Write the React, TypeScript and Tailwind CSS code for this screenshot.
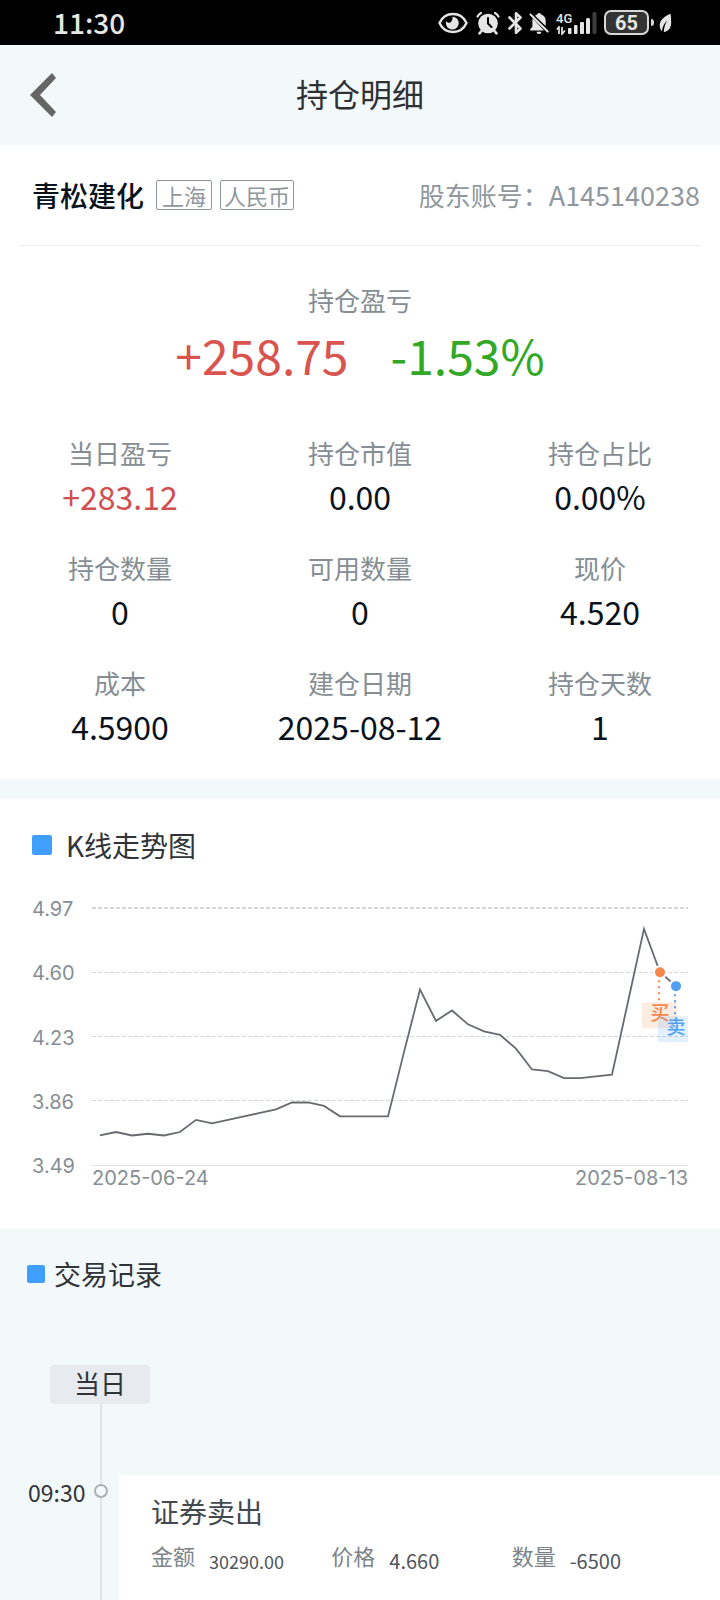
const PRICES = [
  3.66, 3.68, 3.66, 3.67, 3.66, 3.68, 3.75, 3.73, 3.75, 3.77, 3.79, 3.81, 3.85,
  3.85, 3.83, 3.77, 3.77, 3.77, 3.77, 4.14, 4.5, 4.32, 4.38, 4.3, 4.26, 4.24,
  4.16, 4.04, 4.03, 3.99, 3.99, 4.0, 4.01, 4.43, 4.85, 4.6, 4.52,
];
const TICKS = ['4.97', '4.60', '4.23', '3.86', '3.49'];
const MAX = 4.97;
const MIN = 3.49;
const PLOT_W = 596;
const PLOT_H = 257;

const px = (i: number) => 8 + i * 16;
const py = (price: number) => 1 + ((MAX - price) / (MAX - MIN)) * PLOT_H;

interface Stat {
  label: string;
  value: string;
  up?: boolean;
}

const STATS: Stat[] = [
  { label: '当日盈亏', value: '+283.12', up: true },
  { label: '持仓市值', value: '0.00' },
  { label: '持仓占比', value: '0.00%' },
  { label: '持仓数量', value: '0' },
  { label: '可用数量', value: '0' },
  { label: '现价', value: '4.520' },
  { label: '成本', value: '4.5900' },
  { label: '建仓日期', value: '2025-08-12' },
  { label: '持仓天数', value: '1' },
];

function StatusBar() {
  return (
    <div className="flex h-[45px] items-center justify-between bg-black pl-[53px] pr-12 text-[#e6e6e6]">
      <span className="text-[28px] leading-[45px] font-medium">11:30</span>
      <div className="flex items-center">
        <svg width="30" height="22" viewBox="0 0 30 22" fill="none">
          <path d="M1.5 11C4 5.500 9 2 15 2s11 3.500 13.500 9C26 16.500 21 20 15 20S4 16.500 1.500 11Z" stroke="currentColor" strokeWidth="2.400" />
          <path d="M14.500 4.800a6.400 6.400 0 1 1-6.400 7.600c-.3-1.300 0-2.300.5-3.200.8 1.500 2.600 2 4 1 1.700-1.200 2-3.400 1.900-5.400Z" fill="currentColor" />
        </svg>
        <svg className="ml-2" width="24" height="24" viewBox="0 0 24 24" fill="none" stroke="currentColor">
          <circle cx="12" cy="12.500" r="9.800" fill="currentColor" stroke="none" />
          <path d="M1.500 5.500C2.300 4 3.600 2.700 5 2M22.500 5.500C21.700 4 20.400 2.700 19 2" strokeWidth="2.200" strokeLinecap="round" />
          <path d="M5.500 20 3.500 22.300M18.500 20l2 2.300" strokeWidth="2.600" strokeLinecap="round" />
          <path d="M12 7v5.500l3.500 3.500" stroke="#000" strokeWidth="2" strokeLinecap="round" />
        </svg>
        <svg className="ml-2" width="14" height="24" viewBox="0 0 14 24" fill="none" stroke="currentColor" strokeWidth="2.600" strokeLinecap="round" strokeLinejoin="round">
          <path d="M1.500 6.500 12.500 17.500 8 21.800V2.200l4.500 4.300-11 11" />
        </svg>
        <svg className="ml-[7px]" width="20" height="24" viewBox="0 0 20 24">
          <path d="M8.300 3.200a2 2 0 0 1 3.600 0c3 .8 4.800 3.400 4.800 6.500v5.200L6 4.800c.7-.7 1.500-1.300 2.300-1.600ZM3.400 9.500c0-.8.1-1.500.3-2.200L15 19.500H1.300v-1.600l2.100-2.100ZM7.600 20.700h4.800a2.400 2.400 0 0 1-4.800 0Z" fill="currentColor" />
          <path d="M1.500 3.500 18.700 20.500" stroke="currentColor" strokeWidth="2" strokeLinecap="round" />
        </svg>
        <div className="ml-[7px] flex h-6 items-end">
          <div className="flex w-[18px] flex-col">
            <span className="font-['Roboto',sans-serif] text-[13px] leading-[14px] font-medium">4G</span>
            <svg width="10" height="9" viewBox="0 0 10 9" fill="none" stroke="currentColor" strokeWidth="1.700">
              <path d="M.8 3.500 3 1v7M6 1v7l3-3.500" />
            </svg>
          </div>
          <svg className="-ml-[6px]" width="29" height="24" viewBox="0 0 29 24" fill="currentColor">
            <rect x="0" y="17" width="3.500" height="6" rx="1" />
            <rect x="6" y="14" width="3.500" height="9" rx="1" />
            <rect x="12" y="11" width="4" height="12" rx="1" />
            <rect x="18" y="7" width="4" height="16" rx="1.500" />
            <rect x="24.500" y="1" width="4" height="22" rx="1.500" fill="#3c3c3c" />
          </svg>
        </div>
        <div className="ml-[7px] flex h-[25px] w-[45px] items-center justify-center rounded-[7px] border-2 border-[#d8d8d8] bg-[#333] font-['Roboto',sans-serif] text-[20px] leading-5 font-bold">
          65
        </div>
        <div className="ml-[2px] h-[7px] w-[3px] rounded-r bg-[#d8d8d8]" />
        <svg className="ml-[5px]" width="13" height="20" viewBox="0 0 13 20">
          <path d="M11.500.8C5 3.500.7 7.500.7 12.500c0 2.500 1 4.500 2.300 5.800C3.300 13.500 5.500 10 8.300 7.300 6.500 10.500 5 14 4.800 19c4.500-.5 7.400-4 7.400-9.500 0-3-.3-6-.7-8.700Z" fill="currentColor" />
        </svg>
      </div>
    </div>
  );
}

interface MarkerProps {
  index: number;
  color: string;
  label: string;
  boxX: number;
  boxW: number;
}

function Marker({ index, color, label, boxX, boxW }: MarkerProps) {
  const x = px(index);
  const y = py(PRICES[index]);
  return (
    <g>
      <rect x={boxX} y={y + 30} width={boxW} height="26" fill={color} fillOpacity="0.16" />
      <path d={`M${x - 1} ${y + 8}V${y + 30}`} stroke={color} strokeWidth="2" strokeDasharray="2 4" />
      <circle cx={x} cy={y} r="5" fill={color} />
      <text x={x} y={y + 48} textAnchor="middle" fontSize="19" fontWeight="500" fill={color}>
        {label}
      </text>
    </g>
  );
}

function PriceChart() {
  const line = PRICES.map((p, i) => `${px(i)},${py(p)}`).join(' ');
  return (
    <div className="mt-[42px] px-8">
      <div className="flex">
        <div className="-mt-[13px] -mb-[15px] flex w-[60px] flex-col justify-between font-['Inter',sans-serif] text-[20px] leading-[30px] text-[#868e94]">
          {TICKS.map(t => (
            <span key={t}>{t}</span>
          ))}
        </div>
        <svg className="block min-w-0 flex-1" viewBox={`0 0 ${PLOT_W} ${PLOT_H + 2}`}>
          <path d={`M0 1H${PLOT_W}`} stroke="#d3d5d6" strokeWidth="2" strokeDasharray="4 2" />
          {[65.5, 129.5, 193.5].map(y => (
            <path key={y} d={`M0 ${y}H${PLOT_W}`} stroke="#d6d8d9" strokeDasharray="4 2" />
          ))}
          <path d={`M0 258.500H${PLOT_W}`} stroke="#e2e4e5" />
          <polyline points={line} fill="none" stroke="#656b70" strokeWidth="1.800" />
          <circle cx={px(35)} cy={py(4.6)} r="7" fill="#fff" />
          <circle cx={px(36)} cy={py(4.52)} r="7" fill="#fff" />
          <Marker index={35} color="#f5874a" label="买" boxX={550} boxW={35} />
          <Marker index={36} color="#4f9ff5" label="卖" boxX={566} boxW={30} />
        </svg>
      </div>
      <div className="flex justify-between pl-[60px] font-['Inter',sans-serif] text-[20px] leading-6 text-[#868e94]">
        <span>2025-06-24</span>
        <span>2025-08-13</span>
      </div>
    </div>
  );
}

export default function App() {
  return (
    <div className="flex min-h-screen flex-col bg-[#f3f8fb] font-['Noto_Sans_CJK_SC',sans-serif] text-[#0a121c]">
      <StatusBar />

      <header className="grid h-[100px] grid-cols-[1fr_auto_1fr] items-center px-[30px]">
        <button type="button" aria-label="返回" className="w-[26px] text-[#666]">
          <svg width="26" height="44" viewBox="0 0 26 44" fill="currentColor">
            <path d="M0 22 22 0l4 5-16 17 16 17-4 5Z" />
          </svg>
        </button>
        <h1 className="pb-1 text-[32px] leading-[48px] text-[#303133]">持仓明细</h1>
      </header>

      <section className="bg-white px-5 pb-[30px]">
        <div className="flex h-[101px] items-center justify-between border-b border-[#ebedee] pl-3">
          <div className="flex items-center">
            <h2 className="text-[28px] leading-10 font-medium">青松建化</h2>
            <span className="ml-3 rounded-[2px] border border-[#90989e] px-[5px] text-[22px] leading-7 text-[#90989e]">上海</span>
            <span className="ml-2 rounded-[2px] border border-[#90989e] px-[3px] text-[22px] leading-7 text-[#90989e]">人民币</span>
          </div>
          <p className="text-[26px] leading-10 text-[#90989e]">
            股东账号：<span className="text-[27px]">A145140238</span>
          </p>
        </div>

        <div className="pt-[34px] text-center">
          <p className="text-[26px] leading-10 text-[#868e94]">持仓盈亏</p>
          <p className="flex justify-center gap-[42px] text-[48px] leading-[68px]">
            <span className="text-[#d9534f]">+258.75</span>
            <span className="text-[#33a826]">-1.53%</span>
          </p>
        </div>

        <dl className="-mx-5 mt-[45px] grid grid-cols-3 gap-y-[29px] text-center">
          {STATS.map(s => (
            <div key={s.label}>
              <dt className="text-[26px] leading-10 text-[#868e94]">{s.label}</dt>
              <dd className={s.up ? 'text-[32px] leading-[46px] text-[#d05050]' : 'text-[32px] leading-[46px]'}>{s.value}</dd>
            </div>
          ))}
        </dl>
      </section>

      <section className="mt-5 bg-white pt-[26px] pb-[39px]">
        <div className="flex items-center pl-8">
          <span className="size-5 rounded-[2px] bg-[#409eff]" />
          <h2 className="ml-[14px] text-[28px] leading-10 text-[#303438]">K线走势图</h2>
        </div>
        <PriceChart />
      </section>

      <section className="flex flex-1 flex-col pt-[25px]">
        <div className="flex items-center pl-[27px]">
          <span className="size-[18px] rounded-[2px] bg-[#409eff]" />
          <h2 className="ml-[9px] text-[27px] leading-10 text-[#303438]">交易记录</h2>
        </div>

        <div className="mt-[71px] ml-[50px] h-[39px] w-[100px] rounded bg-[#e7ebef] text-center text-[26px] leading-9 text-[#303438]">当日</div>

        <div className="flex flex-1">
          <time className="w-[100px] pt-[72px] pl-7 text-[23px] leading-8 text-[#303438]">09:30</time>
          <div className="relative w-[2px] bg-[#e1e5e9]">
            <span className="absolute top-20 -left-[6px] size-[14px] rounded-full border-2 border-[#aab0b7] bg-[#f3f8fb]" />
          </div>
          <article className="mt-[71px] ml-[17px] flex-1 bg-white pt-4 pr-7 pb-5 pl-8">
            <h3 className="text-[28px] leading-10 text-[#43494e]">证券卖出</h3>
            <div className="mt-1 grid grid-cols-3 text-[22px] leading-10 text-[#7c8489]">
              <p className="flex">
                金额<span className="ml-[14px] pt-[6px] text-[18px] text-[#50565b]">30290.00</span>
              </p>
              <p className="flex">
                价格<span className="ml-[14px] pt-[6px] text-[20px] text-[#50565b]">4.660</span>
              </p>
              <p className="flex">
                数量<span className="ml-[14px] pt-[6px] text-[20px] text-[#50565b]">-6500</span>
              </p>
            </div>
          </article>
        </div>
      </section>
    </div>
  );
}
